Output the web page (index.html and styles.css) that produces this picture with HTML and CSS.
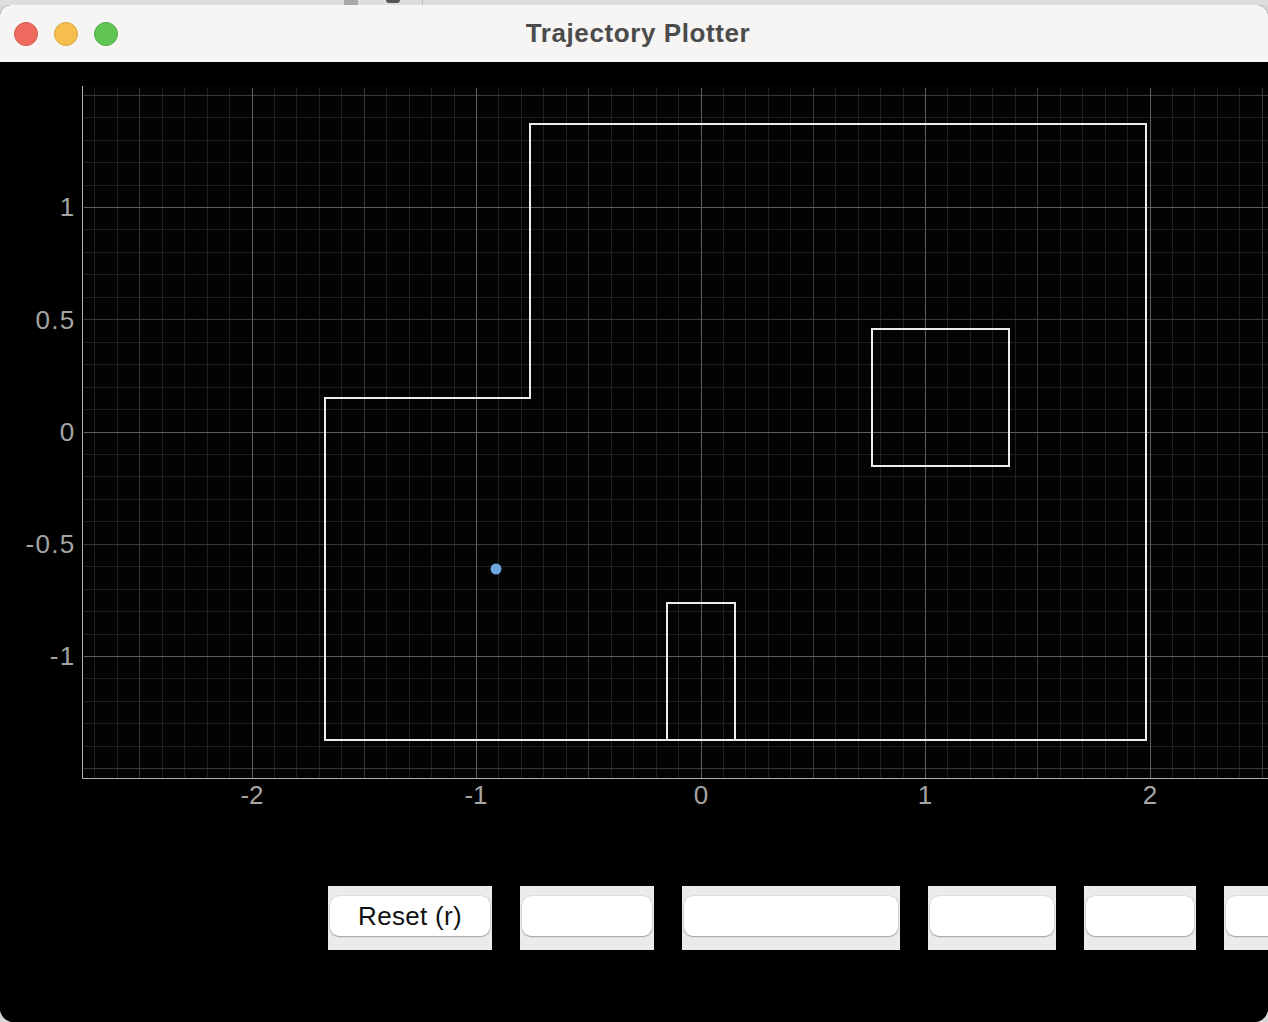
FILE: index.html
```html
<!DOCTYPE html>
<html>
<head>
<meta charset="utf-8">
<title>Trajectory Plotter</title>
<link rel="stylesheet" href="styles.css">
</head>
<body>
<div class="backdrop">
  <div class="bd-block"></div>
  <div class="bd-icon"></div>
  <div class="bd-line"></div>
</div>
<div class="window">
  <div class="titlebar">
    <div class="lights">
      <span class="light red"></span>
      <span class="light yellow"></span>
      <span class="light green"></span>
    </div>
    <div class="title">Trajectory Plotter</div>
  </div>
  <div class="content">
    <svg class="plot" width="1268" height="800" viewBox="0 62 1268 800" xmlns="http://www.w3.org/2000/svg">
      <rect x="0" y="62" width="1268" height="800" fill="#000"/>
      <rect x="83" y="86" width="1185" height="692" fill="#030303"/>
      <path class="grid-dim" d="M94.5 88V778M117.5 88V778M162.5 88V778M184.5 88V778M207.5 88V778M229.5 88V778M274.5 88V778M296.5 88V778M319.5 88V778M341.5 88V778M386.5 88V778M409.5 88V778M431.5 88V778M454.5 88V778M498.5 88V778M521.5 88V778M543.5 88V778M566.5 88V778M611.5 88V778M633.5 88V778M656.5 88V778M678.5 88V778M723.5 88V778M745.5 88V778M768.5 88V778M790.5 88V778M835.5 88V778M858.5 88V778M880.5 88V778M903.5 88V778M947.5 88V778M970.5 88V778M992.5 88V778M1015.5 88V778M1060.5 88V778M1082.5 88V778M1105.5 88V778M1127.5 88V778M1172.5 88V778M1194.5 88V778M1217.5 88V778M1239.5 88V778M84 117.5H1268M84 140.5H1268M84 162.5H1268M84 185.5H1268M84 229.5H1268M84 252.5H1268M84 274.5H1268M84 297.5H1268M84 342.5H1268M84 364.5H1268M84 387.5H1268M84 409.5H1268M84 454.5H1268M84 476.5H1268M84 499.5H1268M84 521.5H1268M84 566.5H1268M84 589.5H1268M84 611.5H1268M84 634.5H1268M84 678.5H1268M84 701.5H1268M84 723.5H1268M84 746.5H1268"/>
      <path class="grid-mid" d="M139.5 88V778M364.5 88V778M588.5 88V778M813.5 88V778M1037.5 88V778M1262.5 88V778M84 95.5H1268M84 319.5H1268M84 544.5H1268M84 768.5H1268"/>
      <path class="grid-major" d="M252.5 88V778M476.5 88V778M701.5 88V778M925.5 88V778M1150.5 88V778M84 207.5H1268M84 432.5H1268M84 656.5H1268"/>
      <path class="axis" d="M82.5 86V778.5H1268"/>
      <polygon class="wall" points="325,398 530,398 530,124 1146,124 1146,740 325,740"/>
      <rect class="wall" x="872" y="329" width="137" height="137"/>
      <polyline class="wall" points="667,740 667,603 735,603 735,740"/>
      <circle cx="496" cy="569" r="5.5" fill="#6ca6e3"/>
      <g class="xlabels">
        <text x="252" y="804">-2</text>
        <text x="476" y="804">-1</text>
        <text x="701" y="804">0</text>
        <text x="925" y="804">1</text>
        <text x="1150" y="804">2</text>
      </g>
      <g class="ylabels">
        <text x="75.5" y="216">1</text>
        <text x="75.5" y="329">0.5</text>
        <text x="75.5" y="441">0</text>
        <text x="75.5" y="553">-0.5</text>
        <text x="75.5" y="665">-1</text>
      </g>
    </svg>
    <div class="buttons">
      <div class="btn-cell w164"><div class="btn">Reset (r)</div></div>
      <div class="btn-cell w134"><div class="btn"></div></div>
      <div class="btn-cell w218"><div class="btn"></div></div>
      <div class="btn-cell w128"><div class="btn"></div></div>
      <div class="btn-cell w112"><div class="btn"></div></div>
      <div class="btn-cell w120"><div class="btn"></div></div>
    </div>
  </div>
</div>
</body>
</html>
```

FILE: styles.css
```css
html, body {
  margin: 0;
  padding: 0;
}
body {
  width: 1268px;
  height: 1022px;
  overflow: hidden;
  background: #d6d6d6;
  font-family: "Liberation Sans", Arial, sans-serif;
}
.backdrop {
  height: 5px;
  display: flex;
  background: #dedede;
  position: relative;
}
.bd-block {
  margin-left: 344px;
  width: 14px;
  height: 5px;
  background: #a9a9a9;
}
.bd-icon {
  margin-left: 28px;
  width: 14px;
  height: 3px;
  background: #555;
  border-radius: 0 0 6px 6px;
}
.bd-line {
  margin-left: 22px;
  width: 1px;
  height: 5px;
  background: #bbb;
}
.window {
  width: 1268px;
  height: 1017px;
  border-radius: 11px 11px 14px 14px;
  overflow: hidden;
  background: #000;
  display: flex;
  flex-direction: column;
}
.titlebar {
  height: 57px;
  flex: none;
  background: #f6f5f3;
  display: flex;
  align-items: center;
  position: relative;
}
.lights {
  display: flex;
  gap: 16px;
  padding-left: 14px;
  padding-top: 1px;
}
.light {
  width: 24px;
  height: 24px;
  border-radius: 50%;
  box-sizing: border-box;
}
.red { background: #ee6a5f; border: 1px solid #d9564c; }
.yellow { background: #f5be4f; border: 1px solid #dea63b; }
.green { background: #61c554; border: 1px solid #4fad43; }
.title {
  position: absolute;
  left: 0;
  right: 0;
  top: 0;
  bottom: 0;
  display: flex;
  align-items: center;
  justify-content: center;
  padding-left: 8px;
  font-size: 26px;
  font-weight: bold;
  color: #4b4b4b;
  letter-spacing: 0.6px;
}
.content {
  flex: 1;
  background: #000;
  display: flex;
  flex-direction: column;
}
.plot {
  display: block;
  flex: none;
}
.grid-dim { stroke: #202020; stroke-width: 1; fill: none; }
.grid-mid { stroke: #383838; stroke-width: 1; fill: none; }
.grid-major { stroke: #5e5e5e; stroke-width: 1; fill: none; }
.axis { stroke: #b2b2b2; stroke-width: 1; fill: none; }
.wall { stroke: #ededed; stroke-width: 2; fill: none; }
.xlabels text {
  font-family: "Liberation Sans", Arial, sans-serif;
  font-size: 26px;
  fill: #a4a4a4;
  text-anchor: middle;
}
.ylabels text {
  font-family: "Liberation Sans", Arial, sans-serif;
  font-size: 26px;
  letter-spacing: 1.3px;
  fill: #a4a4a4;
  text-anchor: end;
}
.buttons {
  margin-top: 24px;
  padding-left: 328px;
  display: flex;
  gap: 28px;
  height: 64px;
  overflow: hidden;
}
.btn-cell {
  flex: none;
  background: #ebebeb;
  box-sizing: border-box;
  padding: 10px 2px 14px;
  height: 64px;
}
.w164 { width: 164px; }
.w134 { width: 134px; }
.w218 { width: 218px; }
.w128 { width: 128px; }
.w112 { width: 112px; }
.w120 { width: 120px; }
.btn {
  height: 40px;
  background: #ffffff;
  border-radius: 9px;
  box-shadow: 0 1px 1.5px rgba(0,0,0,0.28), 0 0 0 0.5px rgba(0,0,0,0.12);
  display: flex;
  align-items: center;
  justify-content: center;
  font-size: 26px;
  letter-spacing: 0.3px;
  color: #111;
}
```
